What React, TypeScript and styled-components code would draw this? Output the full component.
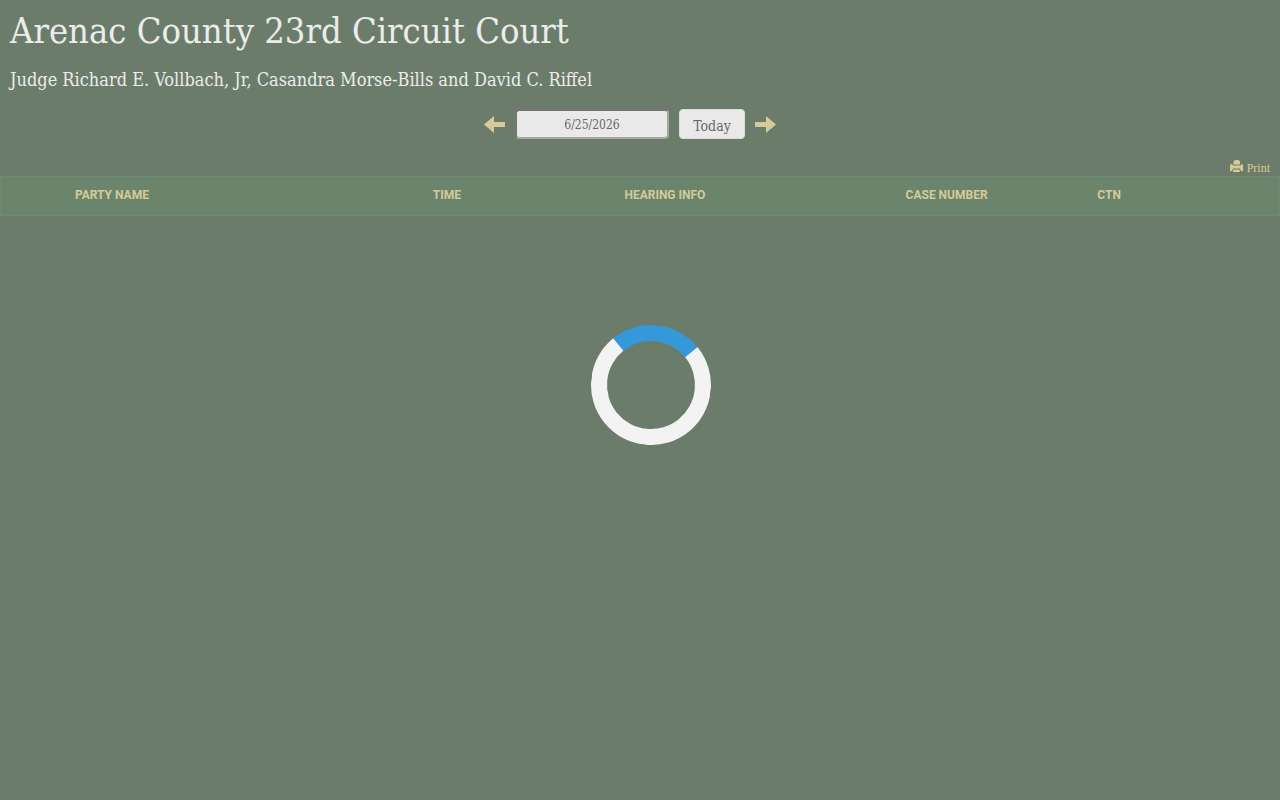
import React, { useState } from "react";
import styled, { createGlobalStyle } from "styled-components";

const slab = '"Roboto Slab", "DejaVu Serif Condensed", "DejaVu Serif", serif';

const GlobalStyle = createGlobalStyle`
  *, *::before, *::after { box-sizing: border-box; }
  body {
    margin: 0;
    background: #6b7d6a;
    color: #ececec;
    font-family: ${slab};
  }
`;

const Page = styled.main`
  display: flex;
  flex-direction: column;
`;

const Header = styled.header`
  padding: 7px 10px 0;
`;

const Title = styled.h1`
  margin: 0;
  font-size: 36px;
  line-height: 48px;
  font-weight: 400;
`;

const Judges = styled.h2`
  margin: 12px 0 0;
  font-size: 18px;
  line-height: 26px;
  font-weight: 400;
`;

const DateBar = styled.form`
  display: flex;
  align-items: center;
  justify-content: center;
  gap: 10px;
  height: 30px;
  margin-top: 16px;
  padding-right: 20px;
`;

const ArrowButton = styled.button`
  display: flex;
  width: 21px;
  padding: 0;
  border: 0;
  background: none;
  color: #d6cb98;
  cursor: pointer;
`;

const DateInput = styled.input`
  width: 154px;
  height: 30px;
  padding: 2px 0 0;
  border: 2px solid;
  border-color: #767676 #a3a8a3 #a3a8a3 #767676;
  border-radius: 4px;
  background: #e9e9e9;
  color: #666;
  font: 400 12px/16px ${slab};
  text-align: center;
`;

const TodayButton = styled.button`
  width: 66px;
  height: 30px;
  padding: 4px 0 0;
  border: 1px solid #ddd;
  border-radius: 4px;
  background: #e9e9e9;
  color: #666;
  font: 400 14px/20px ${slab};
  cursor: pointer;
`;

const Tools = styled.div`
  display: flex;
  justify-content: flex-end;
  height: 37px;
  padding: 21px 10px 0;
`;

const PrintLink = styled.a`
  display: flex;
  gap: 4px;
  height: 16px;
  color: #d6cb98;
  font: 400 12px/16px "Liberation Serif", serif;
  text-decoration: none;
`;

const Hearings = styled.table`
  width: 100%;
  table-layout: fixed;
  border-collapse: separate;
  border-spacing: 0;
  border: 1px solid #6f8a72;
  background: #6b856c;
`;

const HeadCell = styled.th<{ $width: number }>`
  width: ${(p) => p.$width}%;
  height: 38px;
  padding: 0 10px 2px;
  color: #d6cb98;
  font: 700 12px/16px Roboto, sans-serif;
  text-align: left;
  text-transform: uppercase;
`;

const Loading = styled.div`
  display: flex;
  justify-content: center;
  padding: 109px 0 0 22px;
`;

const Spinner = styled.div`
  width: 120px;
  height: 120px;
  border: 16px solid #f3f3f3;
  border-top-color: #3498db;
  border-radius: 50%;
  transform: rotate(6deg);
`;

const columns = [
  { label: "", width: 5 },
  { label: "Party Name", width: 28 },
  { label: "Time", width: 15 },
  { label: "Hearing Info", width: 22 },
  { label: "Case Number", width: 15 },
  { label: "CTN", width: 15 },
];

const ArrowIcon = ({ right = false }: { right?: boolean }) => (
  <svg width="21" height="17" viewBox="0 0 21 17" aria-hidden="true">
    <path
      fill="currentColor"
      d={right ? "M21 8.5 11 0v6H0v5h11v6z" : "M0 8.5 10 0v6h11v5H10v6z"}
    />
  </svg>
);

const PrinterIcon = () => (
  <svg width="13" height="13" viewBox="0 0 13 13" aria-hidden="true">
    <path
      fill="currentColor"
      d="M3.5 4.5V1.5L5 0h3.5L10 1.5v3zM0 5.5 1 4h1.5v1.5H11V4h1l1 1.5V11h-2.2L10 8.5H3L2.2 11H0zM3.8 9.5h5.4l1 2.5H2.8z"
    />
  </svg>
);

export default function App() {
  const [date, setDate] = useState("6/25/2026");
  return (
    <Page>
      <GlobalStyle />
      <Header>
        <Title>Arenac County 23rd Circuit Court</Title>
        <Judges>Judge Richard E. Vollbach, Jr, Casandra Morse-Bills and David C. Riffel</Judges>
      </Header>
      <DateBar onSubmit={(e) => e.preventDefault()}>
        <ArrowButton type="button" aria-label="Previous day">
          <ArrowIcon />
        </ArrowButton>
        <DateInput aria-label="Hearing date" value={date} onChange={(e) => setDate(e.target.value)} />
        <TodayButton type="button" onClick={() => setDate("6/25/2026")}>Today</TodayButton>
        <ArrowButton type="button" aria-label="Next day">
          <ArrowIcon right />
        </ArrowButton>
      </DateBar>
      <Tools>
        <PrintLink href="#print">
          <PrinterIcon />
          Print
        </PrintLink>
      </Tools>
      <Hearings>
        <thead>
          <tr>
            {columns.map((c) => (
              <HeadCell key={c.label} $width={c.width} scope="col">{c.label}</HeadCell>
            ))}
          </tr>
        </thead>
      </Hearings>
      <Loading>
        <Spinner role="status" aria-label="Loading" />
      </Loading>
    </Page>
  );
}
